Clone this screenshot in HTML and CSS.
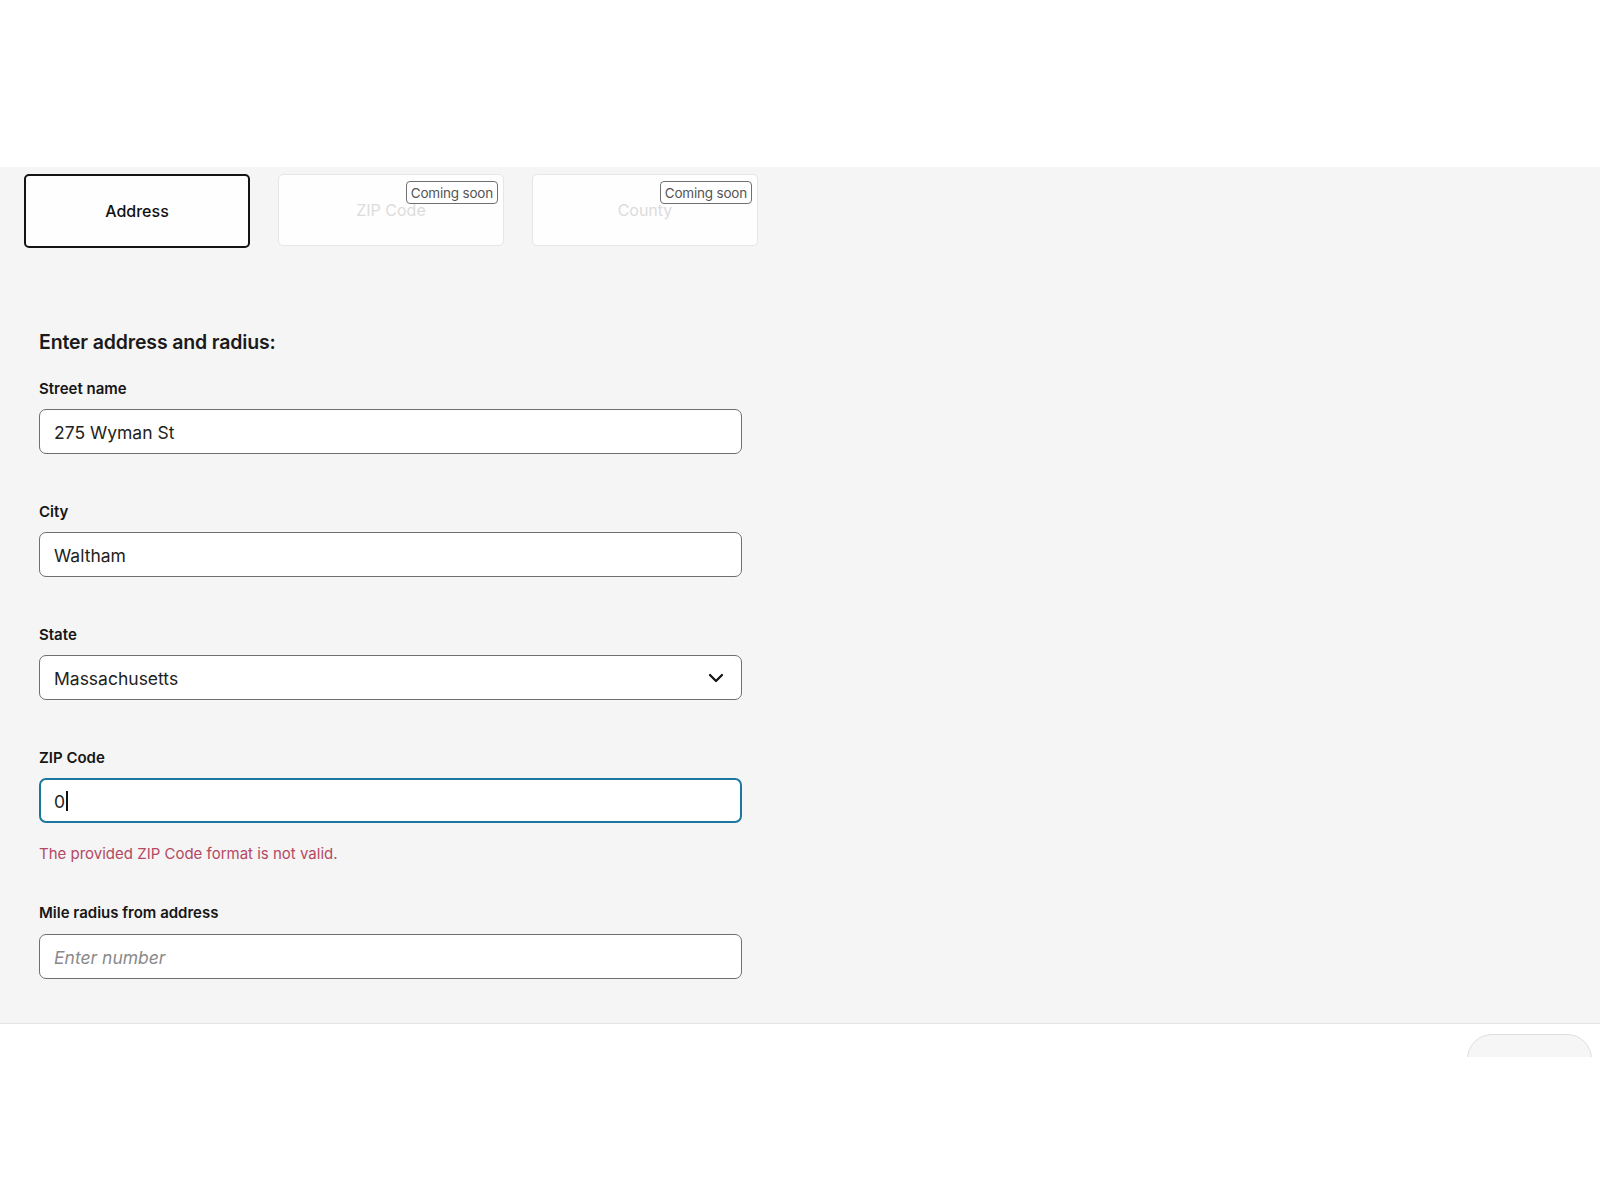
FILE: index.html
```html
<!DOCTYPE html>
<html lang="en">
<head>
<meta charset="utf-8">
<title>Enter address and radius</title>
<link rel="stylesheet" href="styles.css">
</head>
<body>
<header class="top"></header>
<main class="panel">
  <div class="tabs">
    <div class="tab tab-active">Address</div>
    <div class="tab tab-disabled">ZIP Code<span class="badge">Coming soon</span></div>
    <div class="tab tab-disabled">County<span class="badge">Coming soon</span></div>
  </div>
  <section class="form">
    <h2 class="form-title">Enter address and radius:</h2>
    <div class="field">
      <div class="label">Street name</div>
      <div class="box">275 Wyman St</div>
    </div>
    <div class="field">
      <div class="label">City</div>
      <div class="box">Waltham</div>
    </div>
    <div class="field">
      <div class="label">State</div>
      <div class="box box-select">
        <span>Massachusetts</span>
        <svg class="chev" width="16" height="10" viewBox="0 0 16 10"><path d="M2 2 L8 8 L14 2" fill="none" stroke="#111" stroke-width="2.2" stroke-linecap="round" stroke-linejoin="round"/></svg>
      </div>
    </div>
    <div class="field field-error">
      <div class="label">ZIP Code</div>
      <div class="box box-focus">0<span class="caret"></span></div>
      <div class="error">The provided ZIP Code format is not valid.</div>
    </div>
    <div class="field field-last">
      <div class="label label-tight">Mile radius from address</div>
      <div class="box box-placeholder">Enter number</div>
    </div>
  </section>
</main>
<footer class="foot">
  <div class="foot-btn"></div>
</footer>
</body>
</html>
```
FILE: styles.css
```css
* { box-sizing: border-box; }
html, body { margin: 0; padding: 0; background: #ffffff; }
body {
  font-family: Inter, "Noto Sans", "Liberation Sans", sans-serif;
  color: #1a1a1a;
  width: 1600px;
  height: 1200px;
  overflow: hidden;
}
.top { height: 167px; background: #ffffff; }
.panel {
  background: #f5f5f5;
  border-bottom: 1px solid #e4e4e4;
  padding: 7px 0 44px 0;
}
.tabs {
  display: flex;
  align-items: flex-start;
  gap: 28px;
  padding-left: 24px;
}
.tab {
  position: relative;
  width: 226px;
  height: 72px;
  display: flex;
  align-items: center;
  justify-content: center;
  background: #fefefe;
  border-radius: 5px;
  font-size: 16px;
  font-weight: 500;
}
.tab-active {
  height: 74px;
  border: 2px solid #141414;
  color: #111;
}
.tab-disabled {
  border: 1px solid #e6e6e6;
  color: #dcdcdc;
  font-weight: 400;
}
.badge {
  position: absolute;
  top: 6px;
  right: 5px;
  height: 23px;
  padding: 0 4px;
  display: flex;
  align-items: center;
  border: 1.5px solid #707070;
  border-radius: 4px;
  background: #fff;
  color: #555;
  font-size: 13.5px;
  font-weight: 400;
  letter-spacing: -0.2px;
}
.form {
  padding-left: 39px;
  padding-top: 82px;
  width: 742px;
}
.form-title {
  margin: 0 0 25px 0;
  font-size: 19.5px;
  line-height: 24px;
  font-weight: 600;
  color: #1a1a1a;
  letter-spacing: -0.15px;
}
.field { margin-bottom: 48px; }
.field-error { margin-bottom: 39px; }
.field-last { margin-bottom: 0; }
.label {
  font-size: 15px;
  line-height: 20px;
  font-weight: 600;
  color: #161616;
  margin-bottom: 10px;
}
.label-tight { margin-bottom: 11px; }
.box {
  height: 45px;
  width: 703px;
  display: flex;
  align-items: center;
  padding: 1px 14px 0 14px;
  background: #ffffff;
  border: 1px solid #6f6f6f;
  border-radius: 7px;
  font-size: 17.5px;
  color: #222;
}
.box-select { justify-content: space-between; padding-right: 17px; }
.chev { display: block; }
.box-focus {
  border: 2px solid #1c77a0;
  padding-left: 13px;
}
.caret {
  display: inline-block;
  width: 1.5px;
  height: 20px;
  background: #111;
  margin-left: 1px;
}
.box-placeholder {
  color: #8a8a8a;
  font-style: italic;
}
.error {
  margin-top: 21px;
  font-size: 15px;
  line-height: 20px;
  color: #b44864;
}
.foot {
  height: 33px;
  overflow: hidden;
  display: flex;
  justify-content: flex-end;
  padding: 10px 8px 0 0;
}
.foot-btn {
  width: 125px;
  height: 50px;
  border: 1px solid #dedede;
  border-radius: 25px;
  background: #f6f6f6;
}
```
